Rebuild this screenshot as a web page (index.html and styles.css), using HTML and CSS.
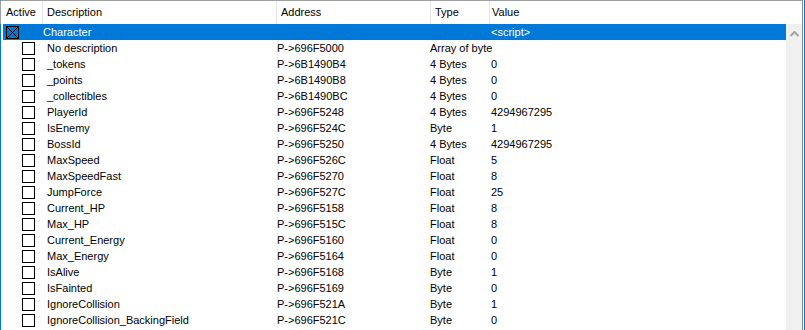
FILE: index.html
```html
<!DOCTYPE html>
<html>
<head>
<meta charset="utf-8">
<link rel="stylesheet" href="styles.css">
</head>
<body>
<div class="frame">
  <div class="list">
    <div class="header">
      <div class="hcell c1">Active</div>
      <div class="hcell c2">Description</div>
      <div class="hcell c3">Address</div>
      <div class="hcell c4">Type</div>
      <div class="hcell c5">Value</div>
    </div>
    <div class="body">
      <div class="rows">
        <div class="row sel top">
          <div class="cell c1"><span class="box"><svg width="13" height="13" viewBox="0 0 13 13"><rect x="0.5" y="0.5" width="12" height="12" fill="none" stroke="#000"/><path d="M1 1L12 12M12 1L1 12" stroke="#000" stroke-width="1"/></svg></span></div>
          <div class="cell c2">Character</div>
          <div class="cell c3"></div>
          <div class="cell c4"></div>
          <div class="cell c5">&lt;script&gt;</div>
        </div>
        <div class="row child"><div class="cell c1"><span class="box"></span></div><div class="cell c2">No description</div><div class="cell c3">P-&gt;696F5000</div><div class="cell c4">Array of byte</div><div class="cell c5"></div></div>
        <div class="row child"><div class="cell c1"><span class="box"></span></div><div class="cell c2">_tokens</div><div class="cell c3">P-&gt;6B1490B4</div><div class="cell c4">4 Bytes</div><div class="cell c5">0</div></div>
        <div class="row child"><div class="cell c1"><span class="box"></span></div><div class="cell c2">_points</div><div class="cell c3">P-&gt;6B1490B8</div><div class="cell c4">4 Bytes</div><div class="cell c5">0</div></div>
        <div class="row child"><div class="cell c1"><span class="box"></span></div><div class="cell c2">_collectibles</div><div class="cell c3">P-&gt;6B1490BC</div><div class="cell c4">4 Bytes</div><div class="cell c5">0</div></div>
        <div class="row child"><div class="cell c1"><span class="box"></span></div><div class="cell c2">PlayerId</div><div class="cell c3">P-&gt;696F5248</div><div class="cell c4">4 Bytes</div><div class="cell c5">4294967295</div></div>
        <div class="row child"><div class="cell c1"><span class="box"></span></div><div class="cell c2">IsEnemy</div><div class="cell c3">P-&gt;696F524C</div><div class="cell c4">Byte</div><div class="cell c5">1</div></div>
        <div class="row child"><div class="cell c1"><span class="box"></span></div><div class="cell c2">BossId</div><div class="cell c3">P-&gt;696F5250</div><div class="cell c4">4 Bytes</div><div class="cell c5">4294967295</div></div>
        <div class="row child"><div class="cell c1"><span class="box"></span></div><div class="cell c2">MaxSpeed</div><div class="cell c3">P-&gt;696F526C</div><div class="cell c4">Float</div><div class="cell c5">5</div></div>
        <div class="row child"><div class="cell c1"><span class="box"></span></div><div class="cell c2">MaxSpeedFast</div><div class="cell c3">P-&gt;696F5270</div><div class="cell c4">Float</div><div class="cell c5">8</div></div>
        <div class="row child"><div class="cell c1"><span class="box"></span></div><div class="cell c2">JumpForce</div><div class="cell c3">P-&gt;696F527C</div><div class="cell c4">Float</div><div class="cell c5">25</div></div>
        <div class="row child"><div class="cell c1"><span class="box"></span></div><div class="cell c2">Current_HP</div><div class="cell c3">P-&gt;696F5158</div><div class="cell c4">Float</div><div class="cell c5">8</div></div>
        <div class="row child"><div class="cell c1"><span class="box"></span></div><div class="cell c2">Max_HP</div><div class="cell c3">P-&gt;696F515C</div><div class="cell c4">Float</div><div class="cell c5">8</div></div>
        <div class="row child"><div class="cell c1"><span class="box"></span></div><div class="cell c2">Current_Energy</div><div class="cell c3">P-&gt;696F5160</div><div class="cell c4">Float</div><div class="cell c5">0</div></div>
        <div class="row child"><div class="cell c1"><span class="box"></span></div><div class="cell c2">Max_Energy</div><div class="cell c3">P-&gt;696F5164</div><div class="cell c4">Float</div><div class="cell c5">0</div></div>
        <div class="row child"><div class="cell c1"><span class="box"></span></div><div class="cell c2">IsAlive</div><div class="cell c3">P-&gt;696F5168</div><div class="cell c4">Byte</div><div class="cell c5">1</div></div>
        <div class="row child"><div class="cell c1"><span class="box"></span></div><div class="cell c2">IsFainted</div><div class="cell c3">P-&gt;696F5169</div><div class="cell c4">Byte</div><div class="cell c5">0</div></div>
        <div class="row child"><div class="cell c1"><span class="box"></span></div><div class="cell c2">IgnoreCollision</div><div class="cell c3">P-&gt;696F521A</div><div class="cell c4">Byte</div><div class="cell c5">1</div></div>
        <div class="row child"><div class="cell c1"><span class="box"></span></div><div class="cell c2">IgnoreCollision_BackingField</div><div class="cell c3">P-&gt;696F521C</div><div class="cell c4">Byte</div><div class="cell c5">0</div></div>
        <div class="row top"><div class="cell c1"><span class="box"></span></div><div class="cell c2"></div><div class="cell c3"></div><div class="cell c4"></div><div class="cell c5"></div></div>
      </div>
      <div class="scrollbar">
        <svg class="arrow" width="9" height="6" viewBox="0 0 9 6"><path d="M0.5 5L4.5 1L8.5 5" fill="none" stroke="#a3a3a3" stroke-width="2"/></svg>
      </div>
    </div>
  </div>
  <div class="edge"></div>
</div>
</body>
</html>
```
FILE: styles.css
```css
html, body {
  margin: 0;
  padding: 0;
  background: #fff;
  overflow: hidden;
}
body {
  font-family: "Liberation Sans", Arial, sans-serif;
  font-size: 11px;
  color: #000;
}
.frame {
  width: 805px;
  height: 330px;
  display: flex;
  overflow: hidden;
}
.list {
  width: 802px;
  height: 330px;
  border-top: 1px solid #a0a0a0;
  box-sizing: border-box;
  display: flex;
  flex-direction: column;
  border-left: 1px solid #0078d7;
}
.edge {
  width: 3px;
  height: 330px;
  background: linear-gradient(to right, #8a8a8a 0, #8a8a8a 1px, #ffffff 1px, #ffffff 2px, #0078d7 2px);
}
.header {
  height: 23px;
  display: grid;
  grid-template-columns: 42px 234px 154px 59px 1fr;
  align-items: stretch;
  flex: none;
  border-left: 1px solid #a0a0a0;
  margin-left: -1px;
}
.hcell {
  line-height: 23px;
  padding-left: 4px;
  border-right: 1px solid #e5e5e5;
  white-space: nowrap;
}
.hcell.c1 { padding-left: 5px; }
.hcell.c5 { border-right: none; padding-left: 2px; }
.body {
  flex: 1;
  display: flex;
  overflow: hidden;
}
.rows {
  flex: 1;
  padding-left: 2px;
  overflow: hidden;
  min-width: 0;
}
.row {
  height: 16px;
  display: grid;
  grid-template-columns: 40px 234px 153px 61px 1fr;
  line-height: 16px;
  white-space: nowrap;
}
.row.sel {
  background: #0078d7;
  color: #fff;
}
.cell {
  min-width: 0;
}
.c1 {
  display: flex;
  align-items: center;
}
.box {
  display: block;
  width: 13px;
  height: 13px;
  box-sizing: border-box;
  border: 1px solid #000;
  background: #fff;
}
.row.top .box {
  margin-left: 3px;
}
.row.sel .box {
  border: none;
  background: transparent;
}
.row.sel .box svg {
  display: block;
}
.row.child .box {
  margin-left: 19px;
}
.row.child .c2 {
  padding-left: 4px;
}
.row.top .c2 {
  padding-left: 0;
}
.scrollbar {
  width: 16px;
  background: #f0f0f0;
  display: flex;
  flex-direction: column;
  align-items: center;
  flex: none;
}
.arrow {
  margin-top: 7px;
}
```
